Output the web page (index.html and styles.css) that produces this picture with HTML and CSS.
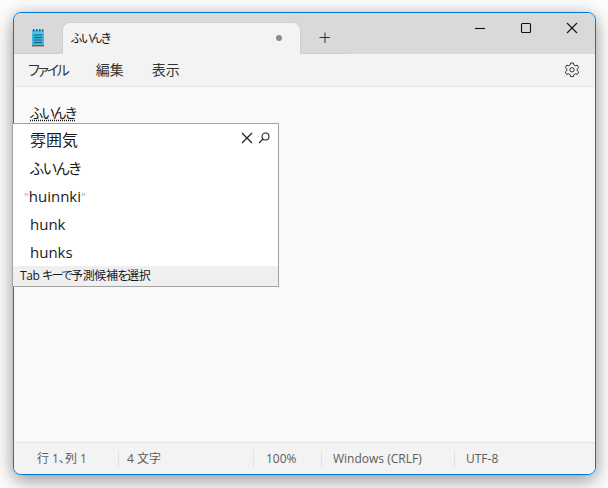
FILE: index.html
```html
<!DOCTYPE html>
<html lang="ja">
<head>
<meta charset="utf-8">
<title>ふいんき - メモ帳</title>
<link rel="stylesheet" href="styles.css">
</head>
<body>
<div class="window">
  <header class="titlebar">
    <div class="appicon">
      <svg width="16" height="20" viewBox="0 0 16 20">
        <rect x="2" y="2" width="12" height="15" fill="#3fb4dc"/>
        <rect x="2" y="2" width="12" height="4" fill="#55c3e8"/>
        <rect x="2" y="17" width="12" height="1.5" fill="#a6582e"/>
        <rect x="3" y="1" width="1.5" height="2.5" fill="#0f6f96"/>
        <rect x="6" y="1" width="1.5" height="2.5" fill="#0f6f96"/>
        <rect x="9" y="1" width="1.5" height="2.5" fill="#0f6f96"/>
        <rect x="12" y="1" width="1.2" height="2.5" fill="#0f6f96"/>
        <rect x="4" y="6.500" width="8" height="1" fill="#10618a"/>
        <rect x="4" y="9" width="8" height="1" fill="#10618a"/>
        <rect x="4" y="11.500" width="8" height="1" fill="#10618a"/>
        <rect x="4" y="14" width="8" height="1" fill="#10618a"/>
      </svg>
    </div>
    <div class="tab">
      <span class="tab-title">ふいんき</span>
      <span class="tab-dot"></span>
    </div>
    <div class="newtab">
      <svg width="12" height="12" viewBox="0 0 12 12"><path d="M6 .5v10.500M.5 5.500h10.500" stroke="#333" stroke-width="1" fill="none"/></svg>
    </div>
    <div class="caption">
      <button class="capbtn"><svg width="12" height="12" viewBox="0 0 12 12"><path d="M1 6.500h10" stroke="#111" stroke-width="1.100"/></svg></button>
      <button class="capbtn"><svg width="12" height="12" viewBox="0 0 12 12"><rect x="1.500" y="1.500" width="9" height="9" rx="1" fill="none" stroke="#111" stroke-width="1.100"/></svg></button>
      <button class="capbtn"><svg width="12" height="12" viewBox="0 0 12 12"><path d="M1 1l10 10M11 1L1 11" stroke="#111" stroke-width="1.100"/></svg></button>
    </div>
  </header>
  <nav class="menubar">
    <span class="menu menu-kana">ファイル</span>
    <span class="menu">編集</span>
    <span class="menu">表示</span>
    <svg class="gear" width="16" height="16" viewBox="0 0 16 16" fill="none" stroke="#333" stroke-width="1">
      <path d="M6.600 1h2.800l.5 2 1.400.8 2-.6 1.400 2.400-1.500 1.400v1.600l1.500 1.400-1.400 2.400-2-.6-1.400.8-.5 2H6.600l-.5-2-1.400-.8-2 .6L1.300 10l1.500-1.400V7L1.300 5.600l1.400-2.400 2 .6 1.400-.8z"/>
      <circle cx="8" cy="7.800" r="2.200"/>
    </svg>
  </nav>
  <main class="editor">
    <span class="composing">ふいんき</span>
    <div class="ime">
      <div class="ime-list">
        <div class="ime-icons">
          <svg width="12" height="12" viewBox="0 0 12 12"><path d="M1 1l10 10M11 1L1 11" stroke="#222" stroke-width="1.300"/></svg>
          <svg width="12" height="12" viewBox="0 0 12 12" fill="none" stroke="#222" stroke-width="1.100"><circle cx="7.500" cy="4.500" r="3.500"/><path d="M5 7L1 11"/></svg>
        </div>
        <div class="ime-item">雰囲気</div>
        <div class="ime-item ime-kana">ふいんき</div>
        <div class="ime-item ime-latin"><span class="quote q-left">"</span>huinnki<span class="quote">"</span></div>
        <div class="ime-item ime-latin">hunk</div>
        <div class="ime-item ime-latin">hunks</div>
      </div>
      <div class="ime-hint">Tab <span class="hint-kana">キーで</span>予測候補<span class="hint-kana">を</span>選択</div>
    </div>
  </main>
  <footer class="statusbar">
    <span class="cell cell-pos">行 1、列 1</span>
    <span class="cell cell-chars">4 文字</span>
    <span class="cell cell-zoom">100%</span>
    <span class="cell cell-eol">Windows (CRLF)</span>
    <span class="cell cell-enc">UTF-8</span>
  </footer>
</div>
</body>
</html>
```
FILE: styles.css
```css
* { box-sizing: border-box; }
html, body { margin: 0; height: 100%; }
body {
  width: 608px;
  height: 488px;
  overflow: hidden;
  padding: 12px 12px 13px 13px;
  background: #fdfdfd;
  font-family: "Open Sans", "Noto Sans CJK JP", sans-serif;
  font-feature-settings: "palt";
  color: #1a1a1a;
}
.window {
  width: 583px;
  height: 463px;
  display: flex;
  flex-direction: column;
  background: #f3f3f3;
  border: 1px solid #0078d4;
  border-radius: 8px;
  box-shadow: 0 6px 20px rgba(0, 0, 0, .38), 0 0 12px rgba(0, 0, 0, .08);
  position: relative;
}
.titlebar {
  height: 41px;
  flex: none;
  display: flex;
  align-items: flex-end;
  background: #d9d9d9;
  border-radius: 7px 7px 0 0;
}
.appicon {
  width: 48px;
  height: 31px;
  display: flex;
  align-items: center;
  justify-content: center;
  padding-right: 1px;
  flex: none;
  border-bottom: 1px solid #cfcfcf;
  border-bottom-right-radius: 6px;
}
.tab {
  width: 239px;
  height: 32px;
  flex: none;
  display: flex;
  align-items: center;
  justify-content: space-between;
  padding: 0 18px 2px 8px;
  background: #f3f3f3;
  border: 1px solid #d0d0d0;
  border-bottom: 0;
  border-radius: 8px 8px 0 0;
}
.tab-title { font-size: 12px; letter-spacing: -1.3px; color: #111; }
.tab-dot { width: 6px; height: 6px; border-radius: 50%; background: #8a8a8a; }
.newtab {
  width: 48px;
  height: 31px;
  flex: none;
  display: flex;
  align-items: center;
  justify-content: center;
  border-bottom: 1px solid #cfcfcf;
}
.caption {
  margin-left: auto;
  align-self: flex-start;
  display: flex;
  height: 30px;
}
.capbtn {
  width: 46px;
  height: 30px;
  padding: 0;
  border: 0;
  background: none;
  display: flex;
  align-items: center;
  justify-content: center;
}
.menubar {
  height: 33px;
  flex: none;
  display: flex;
  align-items: center;
  gap: 28px;
  padding: 0 15px 0 14px;
  background: #f3f3f3;
  border-bottom: 1px solid #e5e5e5;
  font-size: 14px;
  color: #333;
}
.menu { line-height: 20px; }
.menu-kana { letter-spacing: -2.2px; }
.gear { margin-left: auto; }
.editor {
  flex: 1;
  background: #f9f9f9;
  padding: 15px 16px;
  font-size: 14px;
  letter-spacing: -1.5px;
  color: #1a1a1a;
  position: relative;
}
.composing {
  line-height: 22px;
  text-decoration: underline dotted #111;
  text-underline-offset: 2px;
}
.ime {
  position: absolute;
  left: -2px;
  top: 36px;
  width: 267px;
  height: 164px;
  display: flex;
  flex-direction: column;
  background: #fff;
  border: 1px solid #a3a3a3;
  letter-spacing: 0;
}
.ime-list {
  flex: 1;
  position: relative;
  padding: 2px 0 0 17px;
  font-size: 16px;
}
.ime-item { height: 28px; line-height: 28px; color: #1a1a1a; }
.ime-kana { font-size: 15px; letter-spacing: -1.2px; }
.ime-latin { font-size: 15px; }
.q-left { margin-left: -6px; }
.quote { color: #a9a9a9; font-size: 12px; }
.ime-icons {
  position: absolute;
  top: 8px;
  right: 8px;
  display: flex;
  gap: 5px;
}
.ime-hint {
  height: 20px;
  flex: none;
  padding-left: 7px;
  background: #efefef;
  font-size: 12px;
  letter-spacing: -.4px;
  line-height: 19px;
  color: #1a1a1a;
}
.hint-kana { letter-spacing: -1.5px; }
.statusbar {
  height: 32px;
  flex: none;
  display: flex;
  align-items: center;
  background: #f3f3f3;
  border-top: 1px solid #e5e5e5;
  border-radius: 0 0 7px 7px;
  font-size: 12px;
  color: #5c5c5c;
}
.cell {
  height: 17px;
  line-height: 17px;
  padding-left: 8px;
  border-left: 1px solid #e2e2e2;
  flex: none;
}
.cell-pos { width: 104px; padding-left: 23px; border-left: 0; }
.cell-chars { width: 135px; }
.cell-zoom { width: 68px; padding-left: 12px; }
.cell-eol { width: 133px; padding-left: 11px; }
.cell-enc { padding-left: 11px; }
```
